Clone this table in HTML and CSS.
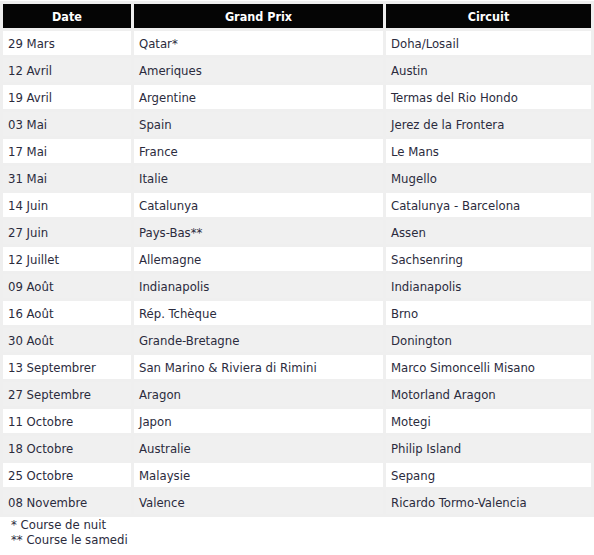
FILE: index.html
```html
<!DOCTYPE html>
<html lang="fr">
<head>
<meta charset="utf-8">
<link rel="stylesheet" href="styles.css">
</head>
<body>
<table class="cal">
  <colgroup>
    <col class="c-date">
    <col class="c-gp">
    <col class="c-circ">
  </colgroup>
  <thead>
    <tr><th>Date</th><th>Grand Prix</th><th>Circuit</th></tr>
  </thead>
  <tbody>
    <tr><td>29 Mars</td><td>Qatar*</td><td>Doha/Losail</td></tr>
    <tr><td>12 Avril</td><td>Ameriques</td><td>Austin</td></tr>
    <tr><td>19 Avril</td><td>Argentine</td><td>Termas del Rio Hondo</td></tr>
    <tr><td>03 Mai</td><td>Spain</td><td>Jerez de la Frontera</td></tr>
    <tr><td>17 Mai</td><td>France</td><td>Le Mans</td></tr>
    <tr><td>31 Mai</td><td>Italie</td><td>Mugello</td></tr>
    <tr><td>14 Juin</td><td>Catalunya</td><td>Catalunya - Barcelona</td></tr>
    <tr><td>27 Juin</td><td>Pays-Bas**</td><td>Assen</td></tr>
    <tr><td>12 Juillet</td><td>Allemagne</td><td>Sachsenring</td></tr>
    <tr><td>09 Août</td><td>Indianapolis</td><td>Indianapolis</td></tr>
    <tr><td>16 Août</td><td>Rép. Tchèque</td><td>Brno</td></tr>
    <tr><td>30 Août</td><td>Grande-Bretagne</td><td>Donington</td></tr>
    <tr><td>13 Septembrer</td><td>San Marino &amp; Riviera di Rimini</td><td>Marco Simoncelli Misano</td></tr>
    <tr><td>27 Septembre</td><td>Aragon</td><td>Motorland Aragon</td></tr>
    <tr><td>11 Octobre</td><td>Japon</td><td>Motegi</td></tr>
    <tr><td>18 Octobre</td><td>Australie</td><td>Philip Island</td></tr>
    <tr><td>25 Octobre</td><td>Malaysie</td><td>Sepang</td></tr>
    <tr><td>08 Novembre</td><td>Valence</td><td>Ricardo Tormo-Valencia</td></tr>
  </tbody>
</table>
<div class="notes">
  <div>* Course de nuit</div>
  <div>** Course le samedi</div>
</div>
</body>
</html>
```
FILE: styles.css
```css
html, body {
  margin: 0;
  padding: 0;
  background: #ffffff;
}
body {
  font-family: "DejaVu Sans Condensed", "DejaVu Sans", sans-serif;
  font-size: 13px;
  color: #2b2b3d;
  padding-top: 1px;
}
.cal {
  border-collapse: separate;
  border-spacing: 3px;
  table-layout: fixed;
  width: 594px;
  background: #efefef;
}
.c-date { width: 128px; }
.c-gp { width: 249px; }
.c-circ { width: 205px; }
.cal th {
  background: #050505;
  color: #ffffff;
  font-size: 12.5px;
  font-weight: bold;
  height: 24px;
  padding: 0;
  text-align: center;
}
.cal td {
  height: 24px;
  padding: 0 0 0 5px;
  text-align: left;
  white-space: nowrap;
  background: #ffffff;
}
.cal tbody tr:nth-child(even) td {
  background: #f0f0f0;
}
.notes {
  padding-left: 11px;
  line-height: 15px;
}
```
